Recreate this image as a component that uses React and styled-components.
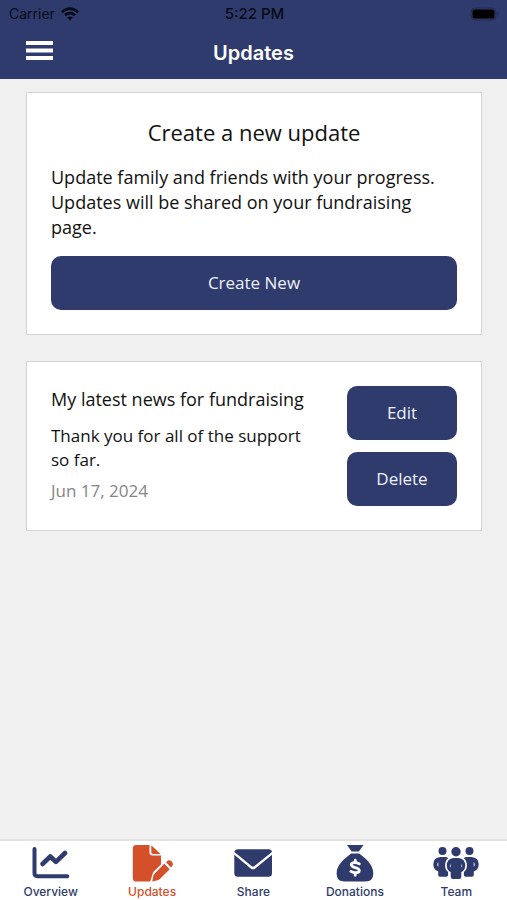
import React from "react";
import styled, { createGlobalStyle } from "styled-components";

const navy = "#2f3b6c";
const orange = "#d4502a";

const GlobalStyle = createGlobalStyle`
  *, *::before, *::after { box-sizing: border-box; }
  body { margin: 0; background: #f0f0f0; font-family: "Open Sans", "Noto Sans", sans-serif; color: #111; }
  h1, h2, h3, p { margin: 0; font-weight: 400; }
  svg { display: block; }
`;

const Screen = styled.div`
  min-height: 100vh;
  display: flex;
  flex-direction: column;
`;

const Header = styled.header`
  background: ${navy};
  font-family: Inter, "Liberation Sans", sans-serif;
`;

const StatusBar = styled.div`
  display: grid;
  grid-template-columns: 1fr auto 1fr;
  align-items: center;
  height: 27px;
  padding: 0 7px 0 9px;
  font-size: 14px;
  line-height: 20px;
  color: #070b18;
`;

const Carrier = styled.span`
  display: flex;
  align-items: center;
  gap: 6px;
`;

const Clock = styled.time`
  font-size: 15px;
  font-weight: 500;
`;

const Battery = styled.svg`
  justify-self: end;
`;

const TitleBar = styled.div`
  display: grid;
  grid-template-columns: 28px 1fr 28px;
  align-items: center;
  height: 52px;
  padding: 0 26px;
`;

const MenuButton = styled.button`
  display: flex;
  padding: 0 0 4px;
  border: 0;
  background: none;
  cursor: pointer;
`;

const PageTitle = styled.h1`
  && { font-weight: 600; }
  text-align: center;
  font-size: 20px;
  line-height: 24px;
  color: #fff;
`;

const Content = styled.main`
  flex: 1;
  display: flex;
  flex-direction: column;
  gap: 26px;
  padding: 13px 25px 26px 26px;
`;

const Card = styled.section`
  padding: 24px;
  border: 1px solid #d4d4d4;
  background: #fff;
`;

const CreateCard = styled(Card)`
  display: flex;
  flex-direction: column;
`;

const CreateTitle = styled.h2`
  text-align: center;
  font-size: 22px;
  line-height: 30px;
`;

const CreateText = styled.p`
  margin: 18px 0 16px;
  font-size: 18px;
  line-height: 25px;
`;

const Button = styled.button`
  height: 54px;
  border: 0;
  border-radius: 10px;
  background: ${navy};
  color: #eef0fa;
  font: 400 17px/24px "Open Sans", "Noto Sans", sans-serif;
  cursor: pointer;
`;

const UpdateCard = styled(Card)`
  display: grid;
  grid-template-columns: 1fr 110px;
  gap: 32px;
`;

const UpdateTitle = styled.h3`
  font-size: 18px;
  line-height: 26px;
`;

const UpdateText = styled.p`
  margin: 12px 0 8px;
  font-size: 17px;
  line-height: 24px;
`;

const UpdateDate = styled.time`
  display: block;
  font-size: 17px;
  line-height: 22px;
  color: #858585;
`;

const Actions = styled.div`
  display: flex;
  flex-direction: column;
  gap: 12px;
`;

const TabBar = styled.nav`
  position: sticky;
  bottom: 0;
  display: grid;
  grid-template-columns: repeat(5, 1fr);
  height: 61px;
  border-top: 2px solid #e2e2e2;
  background: #fff;
  font-family: Inter, "Liberation Sans", sans-serif;
`;

const Tab = styled.a`
  display: flex;
  flex-direction: column;
  align-items: center;
  padding-top: 3px;
  color: ${(p) => (p.$active ? orange : navy)};
  font-size: 12px;
  font-weight: 500;
  line-height: 16px;
  text-decoration: none;
`;

const IconSvg = styled.svg`
  height: 40px;
  width: 48px;
  fill: currentColor;
`;

const Icon = ({ children }) => (
  <IconSvg viewBox="0 0 48 40" aria-hidden="true">{children}</IconSvg>
);

const ChartIcon = () => (
  <Icon>
    <g fill="none" stroke="currentColor" strokeLinecap="round" strokeLinejoin="round">
      <path strokeWidth="4" d="M7.500 5v24q0 3.200 3.200 3.200h29.600" />
      <path strokeWidth="4.600" d="M15.500 20l7.800-7.500 5.600 5.400 9.200-8.900" />
    </g>
  </Icon>
);

const EditFileIcon = () => (
  <Icon>
    <path d="M8 1h13.500v7.500q0 3 3 3H33v9l-7.800 7.600-3 9.400H8Q4.800 37.500 4.800 34V4.500Q4.800 1 8 1z" />
    <path d="M23.300 1.200l9.200 8.800H25q-1.700 0-1.700-1.700z" />
    <path d="M36.200 19.800l5.500 5.400-9.800 9.800q-1 1-2.400 1.300l-5.300 1.200 1.100-5.600q.3-1.300 1.200-2.200z" />
    <path d="M38 18.200l1.400-1.300q2-1.500 4.300.6 2.200 2.300.5 4.500L43 23.500z" />
  </Icon>
);

const MailIcon = () => (
  <Icon>
    <path d="M9 5.200h30.500q3.200 0 3.400 2.800L25.200 22.300q-1.200.9-2.400 0L5.400 8q.4-2.800 3.600-2.800z" />
    <path d="M5.300 10.800l16.400 13.600q2.300 1.700 4.600 0l16.700-13.600v18.400q0 3.600-3.600 3.600H8.900q-3.600 0-3.600-3.600z" />
  </Icon>
);

const MoneyBagIcon = () => (
  <Icon>
    <path d="M16 1h16.500l-4.700 6.500h-7.200z" />
    <path d="M20.200 9.500h8C34 14 42.300 20 42.300 29.500q0 8-8 8H13.600q-8 0-8-8c0-9.500 8.800-15.500 14.600-20z" />
    <path
      fill="none"
      stroke="#fff"
      strokeWidth="2.800"
      strokeLinecap="round"
      d="M24.200 16.200v2.500m0 10v2.600M28.300 19.800c-2.500-1.200-8-2-8 1 0 3.500 8 2.100 8 5.700 0 3.200-6 2.400-8.400.9"
    />
  </Icon>
);

const TeamIcon = () => (
  <Icon>
    <circle cx="10.500" cy="7" r="4" />
    <circle cx="37.500" cy="7" r="4" />
    <circle cx="24" cy="7.700" r="4.700" />
    <path fillRule="evenodd" d="M8.500 13h4.500q2 0 3.300 1.100-3.200 2.800-3.200 7.400 0 4 3 6.500v3q0 1.800-1.800 1.800H8q-1.800 0-1.800-1.800v-3.500Q1.300 25.500 1.300 20.300 1.300 13.500 8.500 13zM6.300 18q-2 2.300 0 5z" />
    <path fillRule="evenodd" d="M39.500 13H35q-2 0-3.300 1.100 3.200 2.800 3.200 7.400 0 4-3 6.500v3q0 1.800 1.800 1.800H40q1.800 0 1.800-1.800v-3.500q4.900-2 4.900-7.200 0-6.800-7.200-7.300zM41.700 18q2 2.300 0 5z" />
    <path fillRule="evenodd" d="M21.500 14h5q6.700.8 6.700 7.500 0 4.500-3.900 6.700v4.500q0 2.300-2.300 2.300h-6q-2.300 0-2.300-2.300v-4.500q-3.900-2.200-3.900-6.700 0-6.700 6.700-7.500zM18.600 19.500q-1.500 2.300 0 4.300zm10.800 0q1.500 2.300 0 4.300z" />
  </Icon>
);

const tabs = [
  { label: "Overview", icon: ChartIcon },
  { label: "Updates", icon: EditFileIcon, active: true },
  { label: "Share", icon: MailIcon },
  { label: "Donations", icon: MoneyBagIcon },
  { label: "Team", icon: TeamIcon },
];

export default function App() {
  return (
    <Screen>
      <GlobalStyle />
      <Header>
        <StatusBar>
          <Carrier>
            Carrier
            <svg width="18" height="14" viewBox="0 0 18 14" aria-hidden="true">
              <g fill="none" stroke="currentColor" strokeWidth="2.600">
                <path d="M1 5.200q8-7 16 0" />
                <path d="M4 8.300q5-4.200 10 0" />
              </g>
              <path d="M6.200 10.500q2.800-2.200 5.600 0L9 13.500z" fill="currentColor" />
            </svg>
          </Carrier>
          <Clock>5:22 PM</Clock>
          <Battery width="30" height="14" viewBox="0 0 30 14" aria-hidden="true">
            <rect x="1" y="1" width="25" height="12" rx="4" fill="none" stroke="#222a50" />
            <rect x="2.500" y="2.500" width="22" height="9" rx="2.500" fill="#000" />
            <path d="M27.500 4.500q3 2.500 0 5z" fill="#222a50" />
          </Battery>
        </StatusBar>
        <TitleBar>
          <MenuButton type="button" aria-label="Open menu">
            <svg width="27" height="20" viewBox="0 0 27 20" fill="#fff" aria-hidden="true">
              <path d="M0 0h27v4H0zM0 7.500h27v4H0zM0 15h27v4H0z" />
            </svg>
          </MenuButton>
          <PageTitle>Updates</PageTitle>
        </TitleBar>
      </Header>
      <Content>
        <CreateCard>
          <CreateTitle>Create a new update</CreateTitle>
          <CreateText>
            Update family and friends with your progress. Updates will be shared on your fundraising page.
          </CreateText>
          <Button type="button">Create New</Button>
        </CreateCard>
        <UpdateCard>
          <div>
            <UpdateTitle>My latest news for fundraising</UpdateTitle>
            <UpdateText>Thank you for all of the support so far.</UpdateText>
            <UpdateDate dateTime="2024-06-17">Jun 17, 2024</UpdateDate>
          </div>
          <Actions>
            <Button type="button">Edit</Button>
            <Button type="button">Delete</Button>
          </Actions>
        </UpdateCard>
      </Content>
      <TabBar aria-label="Main">
        {tabs.map(({ label, icon: TabIcon, active }) => (
          <Tab key={label} href={`#${label.toLowerCase()}`} $active={active} aria-current={active ? "page" : undefined}>
            <TabIcon />
            {label}
          </Tab>
        ))}
      </TabBar>
    </Screen>
  );
}
